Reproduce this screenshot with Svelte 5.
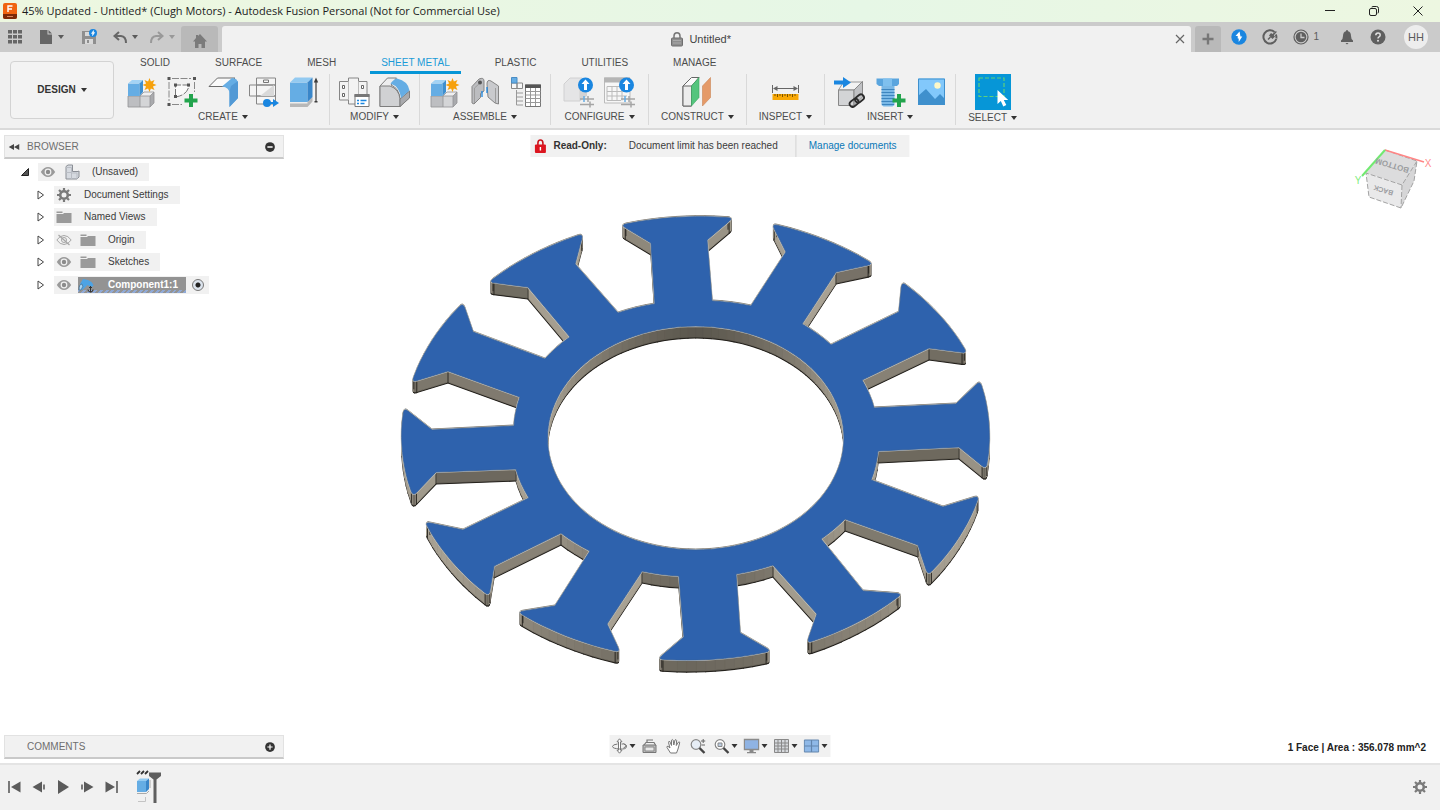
<script>
  const cubes =
    '<path d="M3 20h12v11H3z" fill="#bdbec1"/><path d="M15 20h10v11H15z" fill="#d4d5d7"/><path d="M15 20l4-4h10l-4 4z" fill="#efeff0"/><path d="M25 20l4-4v11l-4 4z" fill="#a9aaad"/><path d="M3 20h22v11H3zM15 20v11M15 20l4-4h10v11l-4 4M25 20l4-4" fill="none" stroke="#929396" stroke-width=".8"/><path d="M3 7.500h11.500V20H3z" fill="#65ade4"/><path d="M3 7.500L7 4h11l-3.500 3.500z" fill="#a3d3f5"/><path d="M14.500 7.500L18 4v12l-3.500 4z" fill="#3d8fd0"/><path d="M24.500 2l1.400 3.600 3.600-1.600-1.600 3.600L31.500 9l-3.600 1.400 1.600 3.600-3.600-1.600-1.400 3.600-1.400-3.600-3.600 1.600 1.600-3.600L17.500 9l3.600-1.400-1.600-3.600 3.600 1.600z" fill="#f6a10c"/>';
  const plus = '<path d="M23 18h4v4.500h4.500v4H27V31h-4v-4.500h-4.500v-4H23z" fill="#22a44d"/>';
  const badge =
    '<circle cx="22.500" cy="9" r="7.500" fill="#1a86e0"/><path d="M22.500 3.500l4 4.500h-2.500v6h-3V8h-2.500z" fill="#fff"/><path d="M17 23h14M17 28.500h14" stroke="#a5a5a5" stroke-width="1.500"/><path d="M21 20v6" stroke="#65ade4" stroke-width="1.500"/><path d="M25 20v6M27 25.500v6" stroke="#a5a5a5" stroke-width="1.500"/>';

  const icons = {
    component: cubes,
    sketch:
      '<path d="M6 2.500h19M3 6v19M28.500 6v10M6 28.500h10" stroke="#888" stroke-dasharray="7 1.500" fill="none"/><path d="M1.500 1h3v3h-3zM27 1h3v3h-3zM1.500 27h3v3h-3z" fill="#555"/><path d="M9.500 21V9H23Q22 19 9.500 21z" fill="#fafafa" stroke="#777" stroke-dasharray="8 1.500"/><path d="M8 7.500h3v3H8zM21 7.500h3v3h-3zM8 19h3v3H8z" fill="#555"/>' + plus,
    flange:
      '<path d="M2 10.500L10.500 2H28l-9 8.500z" fill="#fafafa" stroke="#6c6c6c"/><path d="M15 10.500L25 2q6 0 6 6v14l-8.500 9V18q0-7-7.500-7.500z" fill="#65ade4"/><path d="M24 10l7-5v17l-8.500 9V18q0-4 1.500-8z" fill="#5299d5"/>',
    unfold:
      '<path d="M8.500 2h19v7h-19zM1.500 9h26v11h-26zM8.500 20h19v8h-19z" fill="#f5f5f5" stroke="#868686"/><path d="M12 20L26 9v11z" fill="#d9d9d9"/><path d="M8.500 9v11" stroke="#868686"/><path d="M15.500 4h5v2.500h-5z" fill="none" stroke="#777"/><circle cx="19" cy="27" r="4" fill="#1a86e0"/><path d="M19 26h6v-3l6 4-6 4v-3h-6z" fill="#1a86e0"/>',
    extrude:
      '<path d="M1 26h17.500l5-5v4.500L18.500 31H1z" fill="#b8b8b8"/><path d="M1 26h17.500v1.500H1z" fill="#eee"/><path d="M1 6.500h17.500V26H1z" fill="#65ade4"/><path d="M1 6.500L6 1.500h17.500l-5 5z" fill="#93caf1"/><path d="M18.500 6.500l5-5V21l-5 5z" fill="#3986c9"/><path d="M27 5v20" stroke="#3c3c3c" stroke-width="1.200"/><path d="M27 1.500l2.200 5h-4.400zM25.500 25h3v1.500h-3z" fill="#3c3c3c"/>',
    rules:
      '<path d="M1.500 5.500h9V2h10v3.500h8.500V24h-8.500v4h-10v-4h-9z" fill="#f3f3f3" stroke="#868686"/><path d="M10.500 5.500V24M20.500 5.500V24" stroke="#bbb"/><path d="M4.500 9.500h2v3h-2zM4.500 17.500h2v3h-2zM23.500 9.500h2v3h-2z" fill="#fff" stroke="#666"/><path d="M17 18.500h14v12H17z" fill="#fff" stroke="#777"/><path d="M16.500 18h15v3h-15z" fill="#777"/><path d="M19 24.500h2M19 27.500h2M22.500 24.500h6M22.500 27.500h4" stroke="#1a86e0" stroke-width="1.300"/>',
    bend:
      '<path d="M1 10L8.500 2h9L12 9q8 3 9 14l9-7v6l-9 8.500H1z" fill="#ededee" stroke="#7e7e7e"/><path d="M1 10h10q9 3 10 13v7.500H1z" fill="#d0d1d3" stroke="#7e7e7e"/><path d="M21 23l9.500-8v7L21 30.500z" fill="#a9aaad" stroke="#7e7e7e"/><path d="M11.500 7.500Q15 3 18 2.500 29 5 30.500 14.500L22 22Q20.500 10.500 11.500 7.500z" fill="#65ade4"/>',
    joint:
      '<path d="M3 27V10.500L10 3q5-2 5 2v10l-3.500 2.500v4L5 28z" fill="#bcbdc0" stroke="#858585"/><path d="M5.500 27V12L11 7" fill="none" stroke="#9d9d9d"/><circle cx="11" cy="6.500" r="2" fill="#555"/><path d="M18 8q0-5 4-3l7.500 5v18L26 27l-7-6z" fill="#c9cacd" stroke="#858585"/><path d="M26.500 12v15" stroke="#9d9d9d"/><path d="M13 15v6M18 11v6" stroke="#1a86e0" stroke-width="1.300"/>',
    bom:
      '<path d="M1.500 7h5.500v5.500H1.500zM7 7h5.500v5.500H7z" fill="#f7f7f7" stroke="#888"/><path d="M1.500 1.500H7V7H1.500z" fill="#65ade4" stroke="#4a8cc4"/><path d="M6.500 14v15M6.500 17H13M6.500 21H13M6.500 25H13M6.500 29H13" stroke="#999" fill="none"/><path d="M15.500 9h15v21.500h-15z" fill="#fff" stroke="#777"/><path d="M15 8.500h16v3.500H15z" fill="#555"/><path d="M20.500 12v18M25.500 12v18M15.500 15.500h15M15.500 19h15M15.500 22.500h15M15.500 26.500h15" stroke="#999"/>',
    configure:
      '<path d="M1 8l6-6h12l-2 6v17H1z" fill="#e5e5e6" stroke="#d0d0d1"/><path d="M17 8l7-5v17l-7 5z" fill="#d3d3d4"/>' + badge,
    configtable:
      '<path d="M.5 2H26v25H.5z" fill="#f7f7f7" stroke="#bbb"/><path d="M0 1.500h26v5H0z" fill="#b5b5b5"/><path d="M3 10.500h20M3 15.500h20M3 20h20M3 24.500h14M3 10.500v14M8 10.500v14M13 10.500v14M18 10.500v14" stroke="#bbb"/>' + badge,
    planes:
      '<path d="M2 10l8.500-8.500H18L10.500 10v20H2z" fill="#fafafa" stroke="#666"/><path d="M2 10h8.500v20H2z" fill="#ececec" stroke="#666"/><path d="M10.500 10L18 1.500v20L10.500 30z" fill="#54c57d" stroke="#3aa863" stroke-width=".6"/><path d="M21.500 10l8-8.500v20l-8 8.500z" fill="#e59a68" stroke="#c98456" stroke-width=".6"/>',
    measure:
      '<path d="M3.500 9v8M29.500 9v8M5 12.500h23" stroke="#666"/><path d="M4 12.500l4.500-2.500v5zM29 12.500L24.500 10v5z" fill="#666"/><path d="M3.500 18h26v6h-26z" fill="#f8a806"/><path d="M6 18v2M8.500 18v3M11 18v2M13.500 18v3M16 18v2M18.500 18v3M21 18v2M23.500 18v3M26 18v2" stroke="#7a5200"/>',
    link:
      '<path d="M5.500 14l5-8h19L21 14z" fill="#f3f3f3" stroke="#999"/><path d="M5.500 14H21v15.500H5.500z" fill="#d3d4d6" stroke="#888"/><path d="M21 14l8.500-8.500V21L21 29.500z" fill="#c1c2c5" stroke="#888"/><path d="M1 4.500h9V1l8 5.500-8 5.500V8.500H1z" fill="#1a86e0"/><g transform="rotate(-38 24 24.500)" fill="none" stroke="#2c2c2c" stroke-width="1.800"><rect x="15.500" y="21.500" width="9.500" height="6" rx="3"/><rect x="22.500" y="21.500" width="9.500" height="6" rx="3"/></g>',
    bolt:
      '<path d="M2.500 2.500h22.500V8l-2 2H5L2.500 8z" fill="#5aa5de"/><path d="M9 2.500h9V10H9z" fill="#7fc0ee"/><path d="M7.500 10h13v19l-2 1.500h-9l-2-1.500z" fill="#7ab8e6"/><path d="M7.500 13.500h13M7.500 16.500h13M7.500 19.500h13M7.500 22.500h13M7.500 25.500h13M8 28.500h12" stroke="#3d85bf"/>' + plus,
    image:
      '<path d="M3 2.500h27V29H3z" fill="#82c8fb"/><path d="M3 20l8-7 9 10 5-5 5 5v6H3z" fill="#3f90cd"/><circle cx="22.500" cy="9.500" r="3.200" fill="#fdf8c8"/><path d="M3.500 3h26v25.500h-26z" fill="none" stroke="#3f90cd"/>',
    select:
      '<path d="M4 4h25v18.500H4z" fill="none" stroke="#5fd07b" stroke-width="1.200" stroke-dasharray="4 2"/><path d="M22.500 16v14l3.300-3 2.500 5.500 3-1.400-2.500-5.200h4.400z" fill="#fff"/>',
    grid: '<path d="M1 1h4v3.500H1zM6 1h4v3.500H6zM11 1h4v3.500h-4zM1 6h4v3.500H1zM6 6h4v3.500H6zM11 6h4v3.500h-4zM1 11h4v3.500H1zM6 11h4v3.500H6zM11 11h4v3.500h-4z" fill="#666"/>',
    file: '<path d="M2 1h7.500v4.500H14V15H2zM10.500 1L14 4.500h-3.500z" fill="#666"/>',
    save: '<path d="M1 2h12l2 2v11H1z" fill="#8f8f8f"/><path d="M4 3h6v4H4zM4 10h8v5H4z" fill="#d9d9d9"/><path d="M6 11h2v3H6z" fill="#8f8f8f"/><circle cx="12" cy="4" r="4" fill="#1a86e0"/><path d="M12.500 1.500l-2 3h1.200l-.2 2.200 2.200-3.200h-1.200z" fill="#fff" stroke="#fff" stroke-width=".5"/>',
    undo: '<path d="M7 3L2.500 7 7 11M3 7h6q5 .5 5 7" fill="none" stroke="#666" stroke-width="2"/>',
    redo: '<path d="M9 3l4.500 4L9 11M13 7H7q-5 .5-5 7" fill="none" stroke="#999" stroke-width="2"/>',
    home: '<path d="M8 1l7 7.500h-2V15H9.500v-4h-3v4H3V8.500H1L4 5V2h2v1z" fill="#7b7b7b"/>',
    lock: '<path d="M5 7V5q0-3.300 3-3.300T11 5v2" fill="none" stroke="#777" stroke-width="1.500"/><rect x="2.500" y="7" width="11" height="8" rx="1" fill="#8e8e8e" stroke="#6f6f6f"/><path d="M4 9.500h8M4 12h8" stroke="#aaa"/>',
    redlock: '<path d="M5.500 7V5q0-3 2.500-3t2.500 3v2" fill="none" stroke="#c9131a" stroke-width="1.600"/><rect x="2.500" y="6.500" width="11" height="8.500" rx="1" fill="#dc1620"/><path d="M7.300 9h1.400v3.500H7.300z" fill="#fff"/>',
    close: '<path d="M4 4l8 8M12 4l-8 8" stroke="#666" stroke-width="1.200"/>',
    add: '<path d="M8 2.500v11M2.500 8h11" stroke="#777" stroke-width="2.400"/>',
    online: '<circle cx="8" cy="8" r="7.700" fill="#1a86e0"/><path d="M8.500 2.500L4.500 7h2.200v2.500h1V13l3.600-5.500H9.500z" fill="#fff"/>',
    ext: '<path d="M12.500 3A6.600 6.600 0 1 0 14.300 10" fill="none" stroke="#5f5f5f" stroke-width="2"/><path d="M13.800 5.500q1 2 .6 4" fill="none" stroke="#5f5f5f" stroke-width="2"/><path d="M7 6.500l2-2.500 1.500 1L14 2l.800 1-3 3.200 1.200 1.300L10.500 10z" fill="#5f5f5f"/><path d="M8.500 8L6 10.500" stroke="#5f5f5f" stroke-width="1.500"/>',
    clock: '<circle cx="8" cy="8" r="7" fill="none" stroke="#5f5f5f" stroke-width="1.200"/><circle cx="8" cy="8" r="5.300" fill="#5f5f5f"/><path d="M8 4.500V8.500h3.500" fill="none" stroke="#cbcbcb" stroke-width="1.300"/>',
    bell: '<path d="M8 1q1 0 1 1.200Q12 3 12 7q0 3 2 4.500V13H2v-1.500Q4 10 4 7q0-4 3-4.800Q7 1 8 1zM6.500 14h3L8 15.500z" fill="#5f5f5f"/>',
    help: '<circle cx="8" cy="8" r="7.500" fill="#5f5f5f"/><path d="M5.800 6.300q0-2.300 2.200-2.300t2.200 2q0 1.200-1.200 1.800-1 .6-1 1.700" fill="none" stroke="#e0e0e0" stroke-width="1.500"/><circle cx="8" cy="11.800" r="1" fill="#e0e0e0"/>',
    eye: '<path d="M.8 8Q4 3 8 3t7.200 5Q12 13 8 13T.8 8z" fill="#9a9a9a"/><circle cx="8" cy="8" r="3.400" fill="#f1f1f1"/><circle cx="8" cy="8" r="2.200" fill="#8b8b8b"/>',
    eyeoff: '<path d="M.8 8Q4 3.500 8 3.500T15.200 8Q12 12.500 8 12.500T.8 8z" fill="none" stroke="#a5a5a5"/><circle cx="8" cy="8" r="2.500" fill="none" stroke="#a5a5a5"/><path d="M2.500 3l11 10" stroke="#a5a5a5" stroke-width="1.200"/>',
    part: '<path d="M2 2.500L4 1h4.500v6.500H14l1-.500v6l-2 2H2z" fill="#d6dae0" stroke="#8b8f96"/><path d="M2 8.500h5.500V15M7.500 8.500v-5H2M13 9v6M7.500 9H13" fill="none" stroke="#b9bdc4"/>',
    gear: '<circle cx="8" cy="8" r="3.800" fill="none" stroke="#7a7a7a" stroke-width="2.600"/><path d="M8 1v2.500M8 12.500V15M1 8h2.500M12.500 8H15M3 3l1.800 1.800M11.200 11.200L13 13M13 3l-1.800 1.800M4.800 11.200L3 13" stroke="#7a7a7a" stroke-width="2.200"/>',
    folder: '<path d="M.5 2.500h6V4h-6zM.5 5h6.500l1-1h7.500v10H.5z" fill="#9a9a9a"/>',
    sheet: '<path d="M2 7l3-5 5 1q5 2 5.500 6l-3 1-3-2-4 4q-2 2-3 0z" fill="#4da3e4"/><path d="M1 13Q1 7 4 7q2 2-1 6z" fill="#a8d5f5" stroke="#39678d" stroke-width=".7"/><path d="M12.500 9v6M10 12.500q0 2.500 2.500 2.500t2.500-2.500M11 10.500h3" fill="none" stroke="#333"/>',
    minus: '<circle cx="8" cy="8" r="6.500" fill="#333"/><path d="M4.500 8h7" stroke="#fff" stroke-width="2"/>',
    pluscircle: '<circle cx="8" cy="8" r="6.500" fill="#333"/><path d="M4.500 8h7M8 4.500v7" stroke="#fff" stroke-width="1.600"/>',
    rewind: '<path d="M8 4v8L1 8zM15 4v8L8 8z" fill="#444"/>',
    first: '<path d="M2 2v12" stroke="#5b5b5b" stroke-width="1.600"/><path d="M13.500 2.500v11L4 8z" fill="#5b5b5b"/>',
    prev: '<path d="M11 2.500v11L1.500 8z" fill="#5b5b5b"/><path d="M13 5.500v5" stroke="#5b5b5b" stroke-width="1.600"/>',
    play: '<path d="M3 1v14l11-7z" fill="#5b5b5b"/>',
    next: '<path d="M5 2.500v11L14.500 8z" fill="#5b5b5b"/><path d="M3 5.500v5" stroke="#5b5b5b" stroke-width="1.600"/>',
    last: '<path d="M14 2v12" stroke="#5b5b5b" stroke-width="1.600"/><path d="M2.500 2.500v11L12 8z" fill="#5b5b5b"/>',
    orbit: '<path d="M8 .8l2.500 3H9v8.400h1.500L8 15.200l-2.500-3H7V3.800H5.500z" fill="#fff" stroke="#777"/><path d="M6 6Q1 6.500 1 8.500T8 11t7-2.500T10 6" fill="none" stroke="#777"/><path d="M12 5.500l3 2.500-3 2" fill="none" stroke="#777"/>',
    look: '<path d="M1.500 7h13v7.500h-13z" fill="#bbb" stroke="#777"/><path d="M3.500 9h9v4h-9z" fill="#e8e8e8" stroke="#888"/><path d="M2.500 7l2-2.500h8L14 7M5.500 4V2h6" fill="none" stroke="#777" stroke-width="1.200"/>',
    pan: '<path d="M5 15L1.500 9.500Q1 8 2.500 8.300L4.500 10 3 4.500q0-1.500 1.300-1L6 7.500 6 2.200q.8-1.400 1.700 0L8.300 7 9.500 2q1-1 1.600.3L10.800 7.500 13 4q1.200-.6 1.200.8L12.500 11 11 15z" fill="#fff" stroke="#777"/>',
    zoom: '<circle cx="6.500" cy="6.500" r="4.800" fill="#e6edf5" stroke="#888" stroke-width="1.200"/><path d="M10 10l5 5" stroke="#444" stroke-width="2.400"/><path d="M11.500 3H16M13.700 1v4M12 7h3.500" stroke="#666"/>',
    fit: '<circle cx="6.500" cy="6.500" r="4.800" fill="#fff" stroke="#888" stroke-width="1.200"/><path d="M4.500 5h4v3.500h-4z" fill="#b9cbe0" stroke="#888"/><path d="M10 10l5 5" stroke="#444" stroke-width="2.400"/>',
    display: '<path d="M.8 1.500h14.400v10H.8z" fill="#8fb3e3" stroke="#8b8b8b" stroke-width="1.400"/><path d="M6 12h4v2h2.500v1.200h-9V14H6z" fill="#888"/>',
    mesh: '<path d="M1 1.500h14v13H1z" fill="#d5d8dc" stroke="#888"/><path d="M1 5h14M1 8h14M1 11h14M4.500 1v14M8 1v14M11.500 1v14" stroke="#888"/>',
    views: '<path d="M.8 2h14.400v12H.8z" fill="#8fb9e8" stroke="#6285ad"/><path d="M8 2v12M1 8h14" stroke="#6285ad" stroke-width="1.200"/>',
    feature: '<path d="M1 4l3-3M5 4l3-3M9 4l3-3" stroke="#333" stroke-width="1.800"/><path d="M1 11h9v11H1z" fill="#65ade4"/><path d="M1 11l3-2.500h9L10 11z" fill="#93caf1"/><path d="M10 11l3-2.500v10.500l-3 3z" fill="#3986c9"/><path d="M1 23.500h9.500L13 21M14 10v8" fill="none" stroke="#aaa"/><path d="M2 31.500h7.500V27" fill="none" stroke="#c4c4c4"/><path d="M13 2.500h12V6l-4.500 3.500V33h-3V9.500L13 6z" fill="#5f5f5f"/>'
  };

  const tabs = ['SOLID', 'SURFACE', 'MESH', 'SHEET METAL', 'PLASTIC', 'UTILITIES', 'MANAGE'];
  const groups = [
    { label: 'CREATE', tools: ['component', 'sketch', 'flange', 'unfold', 'extrude'] },
    { label: 'MODIFY', tools: ['rules', 'bend'] },
    { label: 'ASSEMBLE', tools: ['component', 'joint', 'bom'] },
    { label: 'CONFIGURE', tools: ['configure', 'configtable'], roomy: true },
    { label: 'CONSTRUCT', tools: ['planes'], roomy: true },
    { label: 'INSPECT', tools: ['measure'], roomy: true },
    { label: 'INSERT', tools: ['link', 'bolt', 'image'] },
    { label: 'SELECT', tools: ['select'], roomy: true }
  ];
  const tree = [
    { name: 'Document Settings', icons: ['gear'] },
    { name: 'Named Views', icons: ['folder'] },
    { name: 'Origin', icons: ['eyeoff', 'folder'] },
    { name: 'Sketches', icons: ['eye', 'folder'] }
  ];
  const navTools = [
    ['orbit', true], ['look', false], ['pan', false], ['zoom', false],
    ['fit', true], ['display', true], ['mesh', true], ['views', true]
  ];
  const playback = ['first', 'prev', 'play', 'next', 'last'];

  // Stator face: per tooth, clockwise: base, neck, tip, tip, neck, base
  const teeth = [
    [[655, 304], [651, 243], [621, 225], [733, 218], [707, 240], [712, 301]],
    [[751, 306], [786, 252], [772, 224], [873, 264], [836, 272], [802, 324]],
    [[831, 345], [899, 312], [902, 282], [967, 353], [929, 348], [862, 380]],
    [[874, 408], [956, 404], [980, 381], [986, 469], [959, 447], [878, 451]],
    [[871, 480], [943, 507], [979, 496], [928, 575], [918, 545], [845, 519]],
    [[821, 539], [863, 591], [902, 594], [807, 643], [817, 614], [773, 565]],
    [[736, 574], [740, 633], [771, 651], [658, 659], [684, 637], [679, 576]],
    [[642, 571], [607, 624], [620, 652], [518, 612], [555, 606], [590, 551]],
    [[561, 533], [494, 566], [489, 596], [425, 522], [463, 530], [529, 498]],
    [[516, 469], [436, 472], [413, 496], [404, 408], [432, 430], [514, 426]],
    [[520, 397], [448, 371], [412, 382], [463, 303], [473, 332], [545, 359]],
    [[570, 337], [528, 287], [489, 282], [583, 234], [575, 264], [618, 313]]
  ];
  const cx = 696, cy = 438, rx = 294, ry = 221, depth = 12;

  function sweep(a, b, steps) {
    const toPolar = ([x, y]) => {
      const u = (x - cx) / rx, v = (y - cy) / ry;
      return [Math.atan2(v, u), Math.hypot(u, v)];
    };
    const [t0, r0] = toPolar(a);
    let [t1, r1] = toPolar(b);
    if (t1 < t0) t1 += Math.PI * 2;
    const out = [];
    for (let i = 1; i < steps; i++) {
      const k = i / steps, t = t0 + (t1 - t0) * k, r = r0 + (r1 - r0) * k;
      out.push([cx + rx * r * Math.cos(t), cy + ry * r * Math.sin(t)]);
    }
    return out;
  }

  function fillet(prev, p, next, radius) {
    const toward = (q) => {
      const d = Math.hypot(q[0] - p[0], q[1] - p[1]);
      return [p[0] + ((q[0] - p[0]) * radius) / d, p[1] + ((q[1] - p[1]) * radius) / d];
    };
    const a = toward(prev), b = toward(next);
    return [0, 0.25, 0.5, 0.75, 1].map((t) => [0, 1].map(
      (i) => (1 - t) * (1 - t) * a[i] + 2 * t * (1 - t) * p[i] + t * t * b[i]
    ));
  }

  const outline = [];
  const corners = [];
  teeth.forEach((tooth, i) => {
    const [b0, n0, t0, t1, n1, b1] = tooth;
    const rim = sweep(t0, t1, 12);
    const left = fillet(n0, t0, rim[1], 5);
    const right = fillet(rim[rim.length - 2], t1, n1, 5);
    outline.push(b0, n0, ...left, ...rim.slice(1, -1), ...right, n1, b1);
    outline.push(...sweep(b1, teeth[(i + 1) % 12][0], 4));
    corners.push(b0, n0, left[0], left[4], right[0], right[4], n1, b1);
  });

  const bore = Array.from({ length: 120 }, (_, i) => {
    const t = (i / 120) * Math.PI * 2;
    return [695.7 + 148.3 * Math.cos(t), 438 + 112 * Math.sin(t)];
  });

  function walls(points) {
    return points.map((p, i) => {
      const q = points[(i + 1) % points.length];
      const len = Math.hypot(q[0] - p[0], q[1] - p[1]) || 1;
      const slope = Math.abs(q[1] - p[1]) / len;
      // Walls facing the viewer on the outer rim catch a little more light
      const lift = p[0] > q[0] ? 0.25 : 0.05;
      const k = Math.min(1, lift + Math.pow(slope, 1.3));
      const mix = [88, 84, 75].map((c, j) => Math.round(c + ([168, 161, 147][j] - c) * k));
      return {
        y: (p[1] + q[1]) / 2,
        color: `rgb(${mix})`,
        face: `${p} ${q} ${q[0]},${q[1] + depth} ${p[0]},${p[1] + depth}`
      };
    });
  }
  const sides = [...walls(outline), ...walls(bore)].sort((a, b) => a.y - b.y);
  const path = (pts) => 'M' + pts.map((p) => p.map((n) => n.toFixed(1)).join(' ')).join('L') + 'Z';
  const face = path(outline) + path(bore);
</script>

{#snippet icon(name, size = 16, h = size)}
  <svg class="icon" width={size} height={h} viewBox="0 0 {size > 30 ? size : name === 'feature' ? 26 : 16} {size > 30 ? size : name === 'feature' ? 34 : 16}" aria-hidden="true">{@html icons[name]}</svg>
{/snippet}

<div class="app">
  <header class="titlebar">
    <svg class="icon" width="14" height="16" viewBox="0 0 14 16" aria-hidden="true">
      <rect width="14" height="16" rx="2" fill="#f0640f" />
      <path d="M0 11h14v3q0 2-2 2H2q-2 0-2-2z" fill="#7c2a06" />
      <path d="M5 9V3h4.500M5 6h4" fill="none" stroke="#fff" stroke-width="1.400" />
      <path d="M4 13.500h6" stroke="#d9875c" />
    </svg>
    <h1>45% Updated - Untitled* (Clugh Motors) - Autodesk Fusion Personal (Not for Commercial Use)</h1>
    <div class="window">
      <button aria-label="Minimize"><svg width="12" height="12"><path d="M1 5.500h10" stroke="#222" /></svg></button>
      <button aria-label="Restore"><svg width="12" height="12"><path d="M4 2.500V2q0-.500.500-.500h4Q10.500 1.500 10.500 3.500v4q0 .500-.500.500h-.500" fill="none" stroke="#222" /><rect x="1.500" y="3.500" width="7" height="7" rx="1.500" fill="none" stroke="#222" /></svg></button>
      <button aria-label="Close"><svg width="12" height="12"><path d="M1.500 1.500l9 9M10.500 1.500l-9 9" stroke="#222" /></svg></button>
    </div>
  </header>

  <div class="docbar">
    <div class="quick">
      <button aria-label="Data panel">{@render icon('grid')}</button>
      <button aria-label="File">{@render icon('file')}<i class="caret"></i></button>
      <button aria-label="Save">{@render icon('save')}</button>
      <button aria-label="Undo">{@render icon('undo')}<i class="caret"></i></button>
      <button aria-label="Redo" class="dim">{@render icon('redo')}<i class="caret"></i></button>
    </div>
    <button class="home" aria-label="Home">{@render icon('home')}</button>
    <div class="doctab">
      <span class="docname">{@render icon('lock')}Untitled*</span>
      <button aria-label="Close document">{@render icon('close')}</button>
    </div>
    <button class="newtab" aria-label="New design">{@render icon('add')}</button>
    <div class="account">
      <button aria-label="Online">{@render icon('online')}</button>
      <button aria-label="Extensions">{@render icon('ext')}</button>
      <button aria-label="Job status" class="jobs">{@render icon('clock')}1</button>
      <button aria-label="Notifications">{@render icon('bell')}</button>
      <button aria-label="Help">{@render icon('help')}</button>
      <button class="avatar">HH</button>
    </div>
  </div>

  <div class="ribbon">
    <div class="workspace"><button>DESIGN <i class="caret"></i></button></div>
    <div class="tools">
      <nav>
        {#each tabs as tab}
          <button class:active={tab === 'SHEET METAL'}>{tab}</button>
        {/each}
      </nav>
      <div class="groups">
        {#each groups as group}
          <section class:roomy={group.roomy}>
            <div class="iconrow">
              {#each group.tools as tool}
                <button class:selecting={tool === 'select'} aria-label={tool}>{@render icon(tool, tool === 'select' ? 36 : 32)}</button>
              {/each}
            </div>
            <button class="label">{group.label}<i class="caret"></i></button>
          </section>
        {/each}
      </div>
    </div>
  </div>

  <main>
    <svg class="model" viewBox="0 130 1440 633" role="img" aria-label="Stator plate">
      {#each sides as side}
        <polygon points={side.face} fill="#25221d" stroke="#25221d" stroke-width="1.200" stroke-linejoin="round" />
      {/each}
      {#each sides as side}
        <polygon points={side.face} fill={side.color} stroke={side.color} stroke-width=".8" transform="translate(0 -1)" />
      {/each}
      {#each corners as c}
        <path d="M{c[0]} {c[1]}v{depth}" stroke="#24211d" stroke-width=".9" />
      {/each}
      <path d={face} fill="#2e62ad" fill-rule="evenodd" stroke="#c2bfb6" stroke-width="2" stroke-linejoin="round" />
      <path d={face} fill="#2e62ad" fill-rule="evenodd" stroke="#315f9f" stroke-width=".8" stroke-linejoin="round" />
    </svg>

    <section class="browser">
      <header class="panel"><button aria-label="Collapse">{@render icon('rewind', 12)}</button><h2>BROWSER</h2><button aria-label="Hide">{@render icon('minus', 12)}</button></header>
      <ul>
        <li class="root">
          <svg class="twist" width="8" height="8" viewBox="0 0 8 8"><path d="M7.500.5v7h-7z" fill="#555" stroke="#222" /></svg>
          <div class="item">{@render icon('eye')}{@render icon('part')}<span>(Unsaved)</span></div>
        </li>
        {#each tree as node}
          <li>
            <svg class="twist" width="8" height="10" viewBox="0 0 8 10"><path d="M1 1v8l5.500-4z" fill="#fff" stroke="#444" /></svg>
            <div class="item">{#each node.icons as name}{@render icon(name)}{/each}<span>{node.name}</span></div>
          </li>
        {/each}
        <li>
          <svg class="twist" width="8" height="10" viewBox="0 0 8 10"><path d="M1 1v8l5.500-4z" fill="#fff" stroke="#444" /></svg>
          <div class="item current">{@render icon('eye')}<b>{@render icon('sheet')}<span>Component1:1</span></b><input type="radio" checked aria-label="Activate Component1:1" /></div>
        </li>
      </ul>
    </section>

    <div class="notice">
      {@render icon('redlock')}<b>Read-Only:</b><span>Document limit has been reached</span><a href="#documents">Manage documents</a>
    </div>

    <svg class="cube" width="80" height="66" viewBox="1354 146 80 66" aria-label="View cube">
      <path d="M1385 150l32 11-15 24-36-12z" fill="#dcdcdd" />
      <path d="M1366 173l36 12-1 23-32-11z" fill="#e9e9ea" />
      <path d="M1417 161l-3 20-13 27 1-23z" fill="#d6d6d7" />
      <path d="M1385 150l32 11-3 20-13 27-32-11-3-24 36 12 15-24M1402 185l-1 23" fill="none" stroke="#a3a3a3" stroke-dasharray="5 2" />
      <path d="M1385 150l39 12" stroke="#ff8585" stroke-width="1.500" />
      <path d="M1385 150l-23 26" stroke="#71e971" stroke-width="2" />
      <text transform="translate(1393 163) rotate(197)" class="facename">BOTTOM</text>
      <text transform="translate(1384 188) rotate(197)" class="facename small">BACK</text>
      <text x="1428" y="167" fill="#ff8d8d">X</text>
      <text x="1358" y="184" fill="#81ec81">Y</text>
    </svg>

    <section class="panel comments"><h2>COMMENTS</h2><button aria-label="Add comment">{@render icon('pluscircle', 12)}</button></section>

    <div class="navbar">
      {#each navTools as [name, menu]}
        <button aria-label={name}>{@render icon(name)}{#if menu}<i class="caret"></i>{/if}</button>
      {/each}
    </div>

    <output>1 Face | Area : 356.078 mm^2</output>
  </main>

  <footer>
    <div class="playback">
      {#each playback as name}
        <button aria-label={name}>{@render icon(name)}</button>
      {/each}
    </div>
    <button class="feature" aria-label="Timeline feature">{@render icon('feature', 26, 34)}</button>
    <button class="settings" aria-label="Timeline settings">{@render icon('gear')}</button>
  </footer>
</div>

<style>
  :global(body) { background: #fff; }
  .app {
    display: flex;
    flex-direction: column;
    min-height: 100vh;
    font: 10px/14px 'Liberation Sans', Arial, sans-serif;
    color: #3c3c3c;
  }
  .app :global(*) { box-sizing: border-box; }
  button {
    display: flex;
    align-items: center;
    justify-content: center;
    padding: 0;
    border: 0;
    background: none;
    font: inherit;
    color: inherit;
  }
  h1, h2 { margin: 0; font: inherit; }
  .icon { display: block; flex: none; }
  .caret {
    flex: none;
    border: 3px solid transparent;
    border-top: 4px solid currentColor;
    border-bottom: 0;
  }

  .titlebar {
    display: flex;
    align-items: center;
    height: 22px;
    padding-left: 3px;
    gap: 5px;
    background: linear-gradient(90deg, #edf7e0, #e6f7e6 60%, #edf7e1);
    color: #1c1c1c;
  }
  h1 { flex: 1; font: 11px/16px 'Open Sans', 'Noto Sans', sans-serif; }
  .window { display: flex; }
  .window button { width: 44px; height: 22px; }

  .docbar {
    display: flex;
    align-items: flex-end;
    height: 30px;
    background: #cbcbcb;
    color: #5b5b5b;
  }
  .quick { display: flex; height: 30px; align-items: center; }
  .quick button { width: 37px; gap: 4px; }
  .quick button:first-child { width: 30px; }
  .quick button:nth-child(2) { width: 42px; }
  .quick button:nth-child(3) { width: 34px; }
  .quick .dim { color: #999; }
  .home { width: 37px; height: 26px; background: #b9b9b9; border-radius: 3px 3px 0 0; margin: 0 4px 0 1px; padding-top: 3px; }
  .doctab {
    flex: 1;
    display: flex;
    align-items: center;
    height: 26px;
    padding-right: 3px;
    background: #f1f1f1;
    border-radius: 3px 3px 0 0;
    font-size: 11px;
  }
  .docname { flex: 1; display: flex; align-items: center; justify-content: center; padding-left: 6px; gap: 4px; color: #444; }
  .newtab { width: 26px; height: 26px; margin-left: 4px; background: #b9b9b9; border-radius: 3px 3px 0 0; }
  .account { display: flex; align-items: center; height: 30px; padding: 0 12px 0 10px; gap: 15px; }
  .jobs { gap: 4px; margin-right: 5px; }
  .avatar { width: 24px; height: 24px; border-radius: 50%; background: #ededed; font-size: 11px; margin-left: 3px; }

  .ribbon {
    display: flex;
    background: #f1f1f1;
    border-bottom: 2px solid #dadada;
    height: 78px;
  }
  .workspace { width: 117px; padding: 9px 3px 9px 10px; }
  .workspace button {
    width: 104px;
    height: 58px;
    gap: 5px;
    border: 1px solid #d3d3d3;
    border-radius: 4px;
    background: #f3f3f3;
    font-weight: bold;
    color: #333;
  }
  .tools { flex: 1; }
  nav { display: flex; height: 22px; padding-left: 12px; gap: 23px; }
  nav button { padding: 2px 11px 0; height: 22px; border-bottom: 3px solid transparent; color: #4c4c4c; }
  nav .active { color: #1a9bd7; border-color: #0696d7; }
  .groups { display: flex; }
  .groups section {
    display: flex;
    flex-direction: column;
    align-items: center;
    padding: 0 8px;
    height: 51px;
    border-right: 1px solid #d9d9d9;
  }
  .groups .roomy { padding: 0 12px; }
  .groups section:last-child { border: 0; }
  .iconrow { display: flex; align-items: center; gap: 9px; height: 36px; }
  .iconrow .selecting { background: #0696d7; }
  .label { gap: 4px; height: 16px; color: #4c4c4c; }
  .label .caret { color: #333; }

  main { position: relative; flex: 1; min-height: 500px; background: #fff; }
  .model { position: absolute; inset: 0; width: 100%; height: 100%; }

  .browser { position: absolute; left: 4px; top: 5px; width: 280px; }
  .panel {
    display: flex;
    align-items: center;
    height: 24px;
    padding-right: 7px;
    background: #f1f1f1;
    border: 1px solid #e2e2e2;
    border-bottom: 2px solid #c9c9c9;
    color: #6e6e6e;
  }
  .panel h2 { flex: 1; padding-left: 22px; }
  .browser .panel button:first-child { width: 18px; }
  .browser .panel h2 { padding-left: 4px; }
  ul { list-style: none; margin: 0; padding: 0; }
  li { display: flex; align-items: center; height: 18px; margin-top: 4px; padding-left: 33px; gap: 9px; }
  li:nth-child(even) { margin-top: 5px; }
  li.root { padding-left: 17px; }
  .item { display: flex; align-items: center; height: 18px; padding: 0 11px 0 2px; gap: 8px; background: #f1f1f1; }
  .item span { padding-left: 4px; }
  .current { padding-right: 5px; gap: 6px; }
  .current b {
    display: flex;
    align-items: center;
    height: 16px;
    padding-right: 8px;
    gap: 10px;
    color: #fff;
    background: repeating-linear-gradient(135deg, #8fa9d6 0 2px, #939393 2px 4px) 0 100% / 100% 3px no-repeat, #939393;
  }
  input {
    appearance: none;
    width: 12px;
    height: 12px;
    margin: 0;
    border: 1px solid #777;
    border-radius: 50%;
    background: radial-gradient(#222 0 2px, #dce4ee 3px);
  }

  .notice {
    position: absolute;
    top: 5px;
    left: 50%;
    transform: translateX(-50%);
    display: flex;
    align-items: center;
    height: 22px;
    padding-left: 2px;
    background: #f1f1f1;
    white-space: nowrap;
  }
  .notice b { padding: 0 22px 0 5px; color: #333; }
  .notice span { padding-right: 18px; }
  .notice a { padding: 4px 13px 4px 12px; border-left: 1px solid #d3d3d3; color: #0a78b8; text-decoration: none; }

  .cube { position: absolute; top: 16px; right: 6px; }
  .cube text { font-size: 10px; text-anchor: middle; }
  .cube .facename { font-size: 8px; font-weight: bold; fill: #9b9c9f; }
  .cube .small { font-size: 7px; }

  .comments { position: absolute; left: 4px; bottom: 4px; width: 280px; }
  .navbar {
    position: absolute;
    bottom: 6px;
    left: 50%;
    transform: translateX(-50%);
    display: flex;
    align-items: center;
    height: 22px;
    padding: 0 5px 0 2px;
    gap: 8px;
    background: #f1f1f1;
    color: #333;
  }
  .navbar button { gap: 2px; }
  .navbar .caret { margin-right: -2px; }
  output { position: absolute; right: 14px; bottom: 8px; font-weight: bold; color: #222; }

  footer {
    display: flex;
    align-items: center;
    height: 47px;
    padding: 0 12px 2px 7px;
    background: #f1f1f1;
    border-top: 2px solid #e4e4e4;
  }
  .playback { display: flex; gap: 8px; }
  .feature { margin-left: 17px; }
  .settings { margin-left: auto; }
</style>
